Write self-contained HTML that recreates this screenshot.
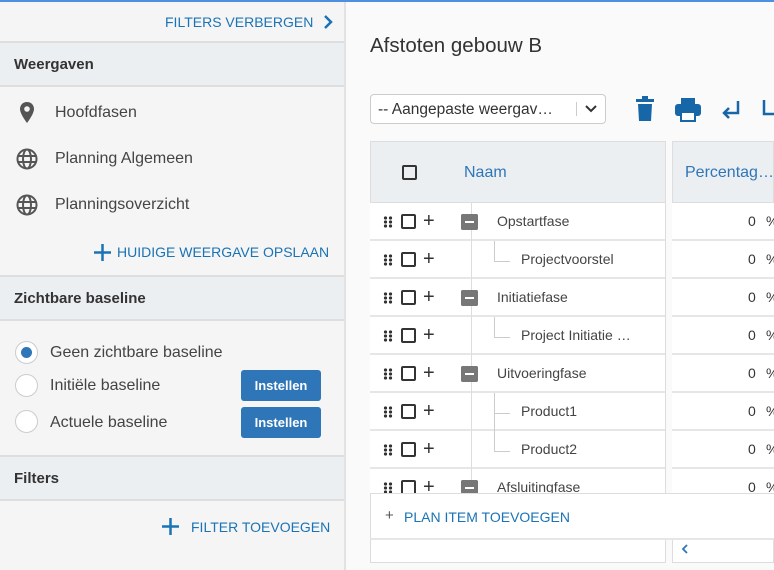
<!DOCTYPE html>
<html><head><style>
*{box-sizing:border-box;margin:0;padding:0}
body{width:774px;height:570px;overflow:hidden;font-family:"Liberation Sans",sans-serif;background:#fafafa;position:relative;color:#333}
.a{position:absolute}
.blue{color:#1a73b5}
.hdr{position:absolute;left:0;width:344px;height:46px;background:#eceff2;border-top:2px solid #dedede;border-bottom:2px solid #dedede;font-weight:bold;font-size:15px;padding:13px 0 0 14px;color:#333}
.item{position:absolute;left:55px;font-size:16px;color:#444}
.radio{position:absolute;left:15px;width:23px;height:23px;border-radius:50%;border:1px solid #ccc;background:#fff}
.btn{position:absolute;left:241px;width:80px;height:31px;background:#2e76b8;border-radius:3px;color:#fff;font-size:13px;font-weight:bold;text-align:center;line-height:31px}
.row{position:absolute;left:370px;width:295px;height:38px;border-bottom:2px solid #e6e6e6;background:#fff}
.rrow{position:absolute;left:672px;width:102px;height:38px;border-bottom:2px solid #e6e6e6;background:#fff;font-size:14px}
.cb{position:absolute;width:15px;height:15px;border:2px solid #333;border-radius:2px}
.dots{position:absolute;left:13px;width:10px;height:12px;background-image:radial-gradient(circle,#333 1.6px,transparent 1.8px);background-size:5px 4px}
.plus{position:absolute;left:53px;font-size:20px;line-height:20px;color:#333}
.tog{position:absolute;left:91px;width:17px;height:16px;background:#777;border-radius:2px}
.tog:after{content:"";position:absolute;left:4px;top:7px;width:9px;height:2px;background:#fff}
.nm{position:absolute;font-size:14px;color:#444}
.up{font-size:14px}
</style></head><body>
<div class="a" style="left:0;top:0;width:774px;height:2px;background:#4d90e0"></div>
<div class="a" style="left:0;top:2px;width:346px;height:568px;background:#f5f5f5;border-right:2px solid #e2e2e2"></div>
<div class="a blue up" style="left:165px;top:14px">FILTERS VERBERGEN</div>
<svg class="a" style="left:322px;top:14px" width="12" height="16"><path d="M3 2l6 6-6 6" stroke="#1a73b5" stroke-width="2.5" fill="none"/></svg>
<div class="hdr" style="top:41px">Weergaven</div>
<svg class="a" style="left:19px;top:101px" width="16" height="24"><path d="M8 1C4 1 1 4 1 8c0 5 7 14 7 14s7-9 7-14c0-4-3-7-7-7z" fill="#555"/><circle cx="8" cy="8" r="2.8" fill="#f5f5f5"/></svg>
<div class="item" style="top:104px">Hoofdfasen</div>
<svg class="a" style="left:16px;top:148px" width="22" height="22" viewBox="0 0 22 22"><g fill="none" stroke="#555" stroke-width="2"><circle cx="11" cy="11" r="9.5"/><ellipse cx="11" cy="11" rx="4" ry="9.5"/><path d="M2 8h18M2 14h18"/></g></svg>
<div class="item" style="top:150px">Planning Algemeen</div>
<svg class="a" style="left:16px;top:194px" width="22" height="22" viewBox="0 0 22 22"><g fill="none" stroke="#555" stroke-width="2"><circle cx="11" cy="11" r="9.5"/><ellipse cx="11" cy="11" rx="4" ry="9.5"/><path d="M2 8h18M2 14h18"/></g></svg>
<div class="item" style="top:196px">Planningsoverzicht</div>
<svg class="a" style="left:94px;top:244px" width="17" height="17"><path d="M8.5 0v17M0 8.5h17" stroke="#1a73b5" stroke-width="2.5"/></svg>
<div class="a blue up" style="left:117px;top:244px">HUIDIGE WEERGAVE OPSLAAN</div>
<div class="hdr" style="top:275px">Zichtbare baseline</div>
<div class="radio" style="top:341px"><div style="position:absolute;left:5px;top:5px;width:11px;height:11px;border-radius:50%;background:#2e76b8"></div></div>
<div class="item" style="left:50px;top:344px">Geen zichtbare baseline</div>
<div class="radio" style="top:374px"></div>
<div class="item" style="left:50px;top:377px">Initiële baseline</div>
<div class="btn" style="top:370px">Instellen</div>
<div class="radio" style="top:410px"></div>
<div class="item" style="left:50px;top:414px">Actuele baseline</div>
<div class="btn" style="top:407px">Instellen</div>
<div class="hdr" style="top:455px">Filters</div>
<svg class="a" style="left:162px;top:518px" width="17" height="17"><path d="M8.5 0v17M0 8.5h17" stroke="#1a73b5" stroke-width="2.5"/></svg>
<div class="a blue up" style="left:191px;top:519px">FILTER TOEVOEGEN</div>

<div class="a" style="left:370px;top:34px;font-size:20.5px;color:#333">Afstoten gebouw B</div>
<div class="a" style="left:370px;top:94px;width:236px;height:30px;border:1px solid #ccc;border-radius:4px;background:#fff"></div>
<div class="a" style="left:378px;top:101px;font-size:15.5px;color:#333">-- Aangepaste weergav…</div>
<div class="a" style="left:576px;top:102px;width:1px;height:14px;background:#ccc"></div>
<svg class="a" style="left:584px;top:104px" width="14" height="10"><path d="M2 2l5 5 5-5" stroke="#333" stroke-width="2" fill="none"/></svg>
<svg class="a" style="left:636px;top:96px" width="18" height="26"><rect x="0" y="3" width="18" height="3" fill="#1766a8"/><rect x="6" y="0" width="6" height="3" fill="#1766a8"/><path d="M2 8h14l-1 17H3z" fill="#1766a8"/></svg>
<svg class="a" style="left:675px;top:98px" width="26" height="24"><rect x="6" y="0" width="14" height="6" fill="#1766a8"/><rect x="0" y="6" width="26" height="12" rx="3" fill="#1766a8"/><rect x="6" y="14" width="14" height="9" fill="#fff" stroke="#1766a8" stroke-width="2"/></svg>
<svg class="a" style="left:720px;top:100px" width="22" height="22"><path d="M18 1v12H4M9 8l-5 5 5 5" stroke="#1766a8" stroke-width="2.5" fill="none"/></svg>
<svg class="a" style="left:762px;top:100px" width="12" height="22"><path d="M2 0v14h10" stroke="#1766a8" stroke-width="2.5" fill="none"/></svg>

<div class="a" style="left:370px;top:141px;width:296px;height:422px;border:1px solid #ddd;background:#fff"></div>
<div class="a" style="left:672px;top:141px;width:102px;height:422px;border:1px solid #ddd;background:#fff"></div>
<div class="a" style="left:370px;top:141px;width:296px;height:62px;background:#eceff2;border:1px solid #ddd"></div>
<div class="a" style="left:672px;top:141px;width:102px;height:62px;background:#eceff2;border:1px solid #ddd"></div>
<div class="cb" style="left:402px;top:165px"></div>
<div class="a" style="left:464px;top:164px;font-size:16px;color:#2e76b8">Naam</div>
<div class="a" style="left:685px;top:164px;font-size:16px;color:#2e76b8">Percentag…</div>

<div class="a" style="left:370px;top:203px;width:296px;height:290px;overflow:hidden">
 <div class="row" style="left:0;top:0"><div class="dots" style="top:13px"></div><div class="cb" style="left:31px;top:11px"></div><div class="plus" style="top:8px">+</div><div class="tog" style="top:11px"></div><div class="nm" style="left:127px;top:10px">Opstartfase</div></div>
 <div class="row" style="left:0;top:38px"><div class="dots" style="top:13px"></div><div class="cb" style="left:31px;top:11px"></div><div class="plus" style="top:8px">+</div><div style="position:absolute;left:124px;top:0;width:1px;height:20px;background:#ccc"></div><div style="position:absolute;left:124px;top:20px;width:16px;height:1px;background:#ccc"></div><div class="nm" style="left:151px;top:10px">Projectvoorstel</div></div>
 <div class="row" style="left:0;top:76px"><div class="dots" style="top:13px"></div><div class="cb" style="left:31px;top:11px"></div><div class="plus" style="top:8px">+</div><div class="tog" style="top:11px"></div><div class="nm" style="left:127px;top:10px">Initiatiefase</div></div>
 <div class="row" style="left:0;top:114px"><div class="dots" style="top:13px"></div><div class="cb" style="left:31px;top:11px"></div><div class="plus" style="top:8px">+</div><div style="position:absolute;left:124px;top:0;width:1px;height:20px;background:#ccc"></div><div style="position:absolute;left:124px;top:20px;width:16px;height:1px;background:#ccc"></div><div class="nm" style="left:151px;top:10px">Project Initiatie …</div></div>
 <div class="row" style="left:0;top:152px"><div class="dots" style="top:13px"></div><div class="cb" style="left:31px;top:11px"></div><div class="plus" style="top:8px">+</div><div class="tog" style="top:11px"></div><div class="nm" style="left:127px;top:10px">Uitvoeringfase</div></div>
 <div class="row" style="left:0;top:190px"><div class="dots" style="top:13px"></div><div class="cb" style="left:31px;top:11px"></div><div class="plus" style="top:8px">+</div><div style="position:absolute;left:124px;top:0;width:1px;height:38px;background:#ccc"></div><div style="position:absolute;left:124px;top:20px;width:16px;height:1px;background:#ccc"></div><div class="nm" style="left:151px;top:10px">Product1</div></div>
 <div class="row" style="left:0;top:228px"><div class="dots" style="top:13px"></div><div class="cb" style="left:31px;top:11px"></div><div class="plus" style="top:8px">+</div><div style="position:absolute;left:124px;top:0;width:1px;height:20px;background:#ccc"></div><div style="position:absolute;left:124px;top:20px;width:16px;height:1px;background:#ccc"></div><div class="nm" style="left:151px;top:10px">Product2</div></div>
 <div class="row" style="left:0;top:266px"><div class="dots" style="top:13px"></div><div class="cb" style="left:31px;top:11px"></div><div class="plus" style="top:8px">+</div><div class="tog" style="top:11px"></div><div class="nm" style="left:127px;top:10px">Afsluitingfase</div></div>
 <div style="position:absolute;left:101px;top:0;width:1px;height:290px;background:#ddd"></div>
 <div style="position:absolute;left:91px;top:11px;width:17px;height:16px;background:#777;border-radius:2px"><div style="position:absolute;left:4px;top:7px;width:9px;height:2px;background:#fff"></div></div>
 <div style="position:absolute;left:91px;top:87px;width:17px;height:16px;background:#777;border-radius:2px"><div style="position:absolute;left:4px;top:7px;width:9px;height:2px;background:#fff"></div></div>
 <div style="position:absolute;left:91px;top:163px;width:17px;height:16px;background:#777;border-radius:2px"><div style="position:absolute;left:4px;top:7px;width:9px;height:2px;background:#fff"></div></div>
 <div style="position:absolute;left:91px;top:277px;width:17px;height:16px;background:#777;border-radius:2px"><div style="position:absolute;left:4px;top:7px;width:9px;height:2px;background:#fff"></div></div>
</div>
<div class="a" style="left:672px;top:203px;width:102px;height:290px;overflow:hidden">
 <div class="rrow" style="left:0;top:0"><span style="position:absolute;left:76px;top:10px">0</span><span style="position:absolute;left:94px;top:10px">%</span></div>
 <div class="rrow" style="left:0;top:38px"><span style="position:absolute;left:76px;top:10px">0</span><span style="position:absolute;left:94px;top:10px">%</span></div>
 <div class="rrow" style="left:0;top:76px"><span style="position:absolute;left:76px;top:10px">0</span><span style="position:absolute;left:94px;top:10px">%</span></div>
 <div class="rrow" style="left:0;top:114px"><span style="position:absolute;left:76px;top:10px">0</span><span style="position:absolute;left:94px;top:10px">%</span></div>
 <div class="rrow" style="left:0;top:152px"><span style="position:absolute;left:76px;top:10px">0</span><span style="position:absolute;left:94px;top:10px">%</span></div>
 <div class="rrow" style="left:0;top:190px"><span style="position:absolute;left:76px;top:10px">0</span><span style="position:absolute;left:94px;top:10px">%</span></div>
 <div class="rrow" style="left:0;top:228px"><span style="position:absolute;left:76px;top:10px">0</span><span style="position:absolute;left:94px;top:10px">%</span></div>
 <div class="rrow" style="left:0;top:266px"><span style="position:absolute;left:76px;top:10px">0</span><span style="position:absolute;left:94px;top:10px">%</span></div>
</div>
<div class="a" style="left:370px;top:493px;width:404px;height:47px;background:#fff;border-top:1px solid #ddd;border-bottom:2px solid #e6e6e6;border-left:1px solid #ddd"></div>
<div class="a" style="left:385px;top:507px;font-size:15px;color:#555">+</div>
<div class="a blue up" style="left:404px;top:509px">PLAN ITEM TOEVOEGEN</div>
<div class="a" style="left:666px;top:540px;width:6px;height:30px;background:#fafafa"></div>
<div class="a" style="left:370px;top:563px;width:404px;height:7px;background:#fafafa"></div>
<svg class="a" style="left:681px;top:544px" width="8" height="10"><path d="M6 1L2 5l4 4" stroke="#2e76b8" stroke-width="1.8" fill="none"/></svg>
</body></html>
